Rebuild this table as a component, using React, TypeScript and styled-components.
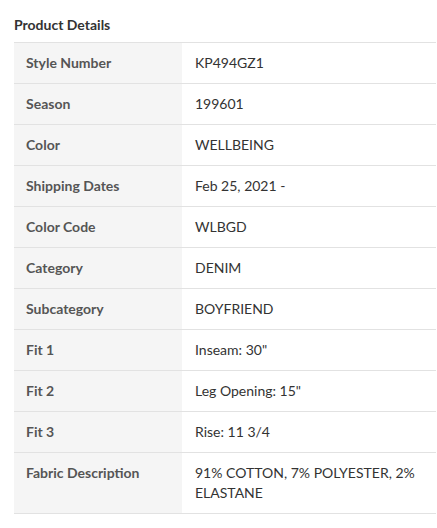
import React from "react";
import styled, { createGlobalStyle } from "styled-components";

const Global = createGlobalStyle`
  html, body { margin: 0; padding: 0; background: #fff; }
  body { font-family: Lato, "Open Sans", sans-serif; }
`;

const Wrapper = styled.section`
  padding: 15px 1px 0 14px;
`;

const Title = styled.h3`
  margin: 0 0 7px 0;
  font-size: 14px;
  line-height: 20px;
  font-weight: 700;
  color: #333;
`;

const Table = styled.table`
  width: 422px;
  border-collapse: collapse;
  border-top: 1px solid #e2e2e2;
  font-size: 14px;
  line-height: 20px;
`;

const Row = styled.tr`
  border-bottom: 1px solid #e2e2e2;
`;

const Label = styled.th`
  width: 144px;
  background: #f5f5f5;
  color: #555;
  font-weight: 700;
  text-align: left;
  vertical-align: top;
  padding: 10px 12px;
`;

const Value = styled.td`
  color: #333;
  font-weight: 400;
  vertical-align: top;
  padding: 10px 12px 10px 13px;
`;

const rows: [string, string][] = [
  ["Style Number", "KP494GZ1"],
  ["Season", "199601"],
  ["Color", "WELLBEING"],
  ["Shipping Dates", "Feb 25, 2021 -"],
  ["Color Code", "WLBGD"],
  ["Category", "DENIM"],
  ["Subcategory", "BOYFRIEND"],
  ["Fit 1", 'Inseam: 30"'],
  ["Fit 2", 'Leg Opening: 15"'],
  ["Fit 3", "Rise: 11 3/4"],
  ["Fabric Description", "91% COTTON, 7% POLYESTER, 2% ELASTANE"],
];

export default function App() {
  return (
    <>
      <Global />
      <Wrapper>
        <Title>Product Details</Title>
        <Table>
          <tbody>
            {rows.map(([k, v]) => (
              <Row key={k}>
                <Label>{k}</Label>
                <Value>{v}</Value>
              </Row>
            ))}
          </tbody>
        </Table>
      </Wrapper>
    </>
  );
}
